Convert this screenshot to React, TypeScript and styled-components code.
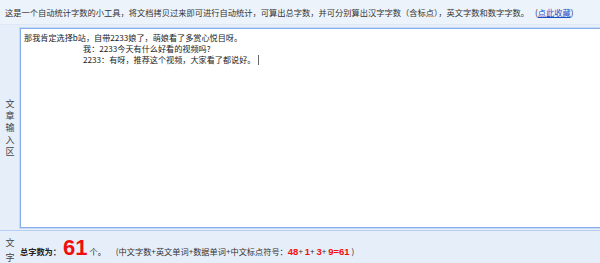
import styled, { createGlobalStyle } from "styled-components";

const GlobalStyle = createGlobalStyle`
    html, body {
        margin: 0;
        padding: 0;
        overflow: hidden;
        background: #e6eef9;
    }

    body {
        font-family: "Noto Sans CJK SC", "Noto Sans", sans-serif;
        color: #333;
    }
`;

const lines = [
    { indent: 0, text: "那我肯定选择b站，自带2233娘了，萌娘看了多赏心悦目呀。" },
    { indent: 59, text: "我：2233今天有什么好看的视频吗?" },
    { indent: 59, text: "2233：有呀，推荐这个视频，大家看了都说好。", caret: true },
];

export default function App() {
    return (
        <>
            <GlobalStyle />
            <Page>
                <Intro>
                    这是一个自动统计字数的小工具，将文档拷贝过来即可进行自动统计，可算出总字数，并可分别算出汉字字数（含标点），英文字数和数字字数。
                    <Fav>
                        (<FavLink href="#">点此收藏</FavLink>)
                    </Fav>
                </Intro>
                <Row>
                    <Label>
                        <span>文</span>
                        <span>章</span>
                        <span>输</span>
                        <span>入</span>
                        <span>区</span>
                    </Label>
                    <Editor>
                        {lines.map((line, i) => (
                            <Line key={i} $indent={line.indent}>
                                {line.text}
                                {line.caret && <Caret />}
                            </Line>
                        ))}
                    </Editor>
                </Row>
                <ResultRow>
                    <Label $top>
                        <span>文</span>
                        <span>字</span>
                    </Label>
                    <Result>
                        <strong>总字数为：</strong>
                        <Total>61</Total>
                        <span>个。</span>
                        <Detail>
                            (中文字数+英文单词+数据单词+中文标点符号：
                            <Num>48</Num>+ <Num>1</Num>+ <Num>3</Num>+ <Num>9=61</Num> )
                        </Detail>
                    </Result>
                </ResultRow>
            </Page>
        </>
    );
}

const Page = styled.div`
    width: 600px;
    height: 263px;
    display: flex;
    flex-direction: column;
`;

const Intro = styled.div`
    height: 25px;
    box-sizing: border-box;
    padding: 6px 0 0 5px;
    font-size: 8.25px;
    line-height: 12px;
    white-space: nowrap;
    background: #edf3fb;
    border-bottom: 1px solid #dfe8f4;
`;

const Fav = styled.span`
    margin-left: 6px;
`;

const FavLink = styled.a`
    color: #1a4fc4;
    text-decoration: underline;
`;

const Row = styled.div`
    display: flex;
    padding-top: 3px;
`;

const Label = styled.div<{ $top?: boolean }>`
    width: 20px;
    flex: none;
    display: flex;
    flex-direction: column;
    align-items: center;
    justify-content: ${({ $top }) => ($top ? "flex-start" : "center")};
    padding-top: ${({ $top }) => ($top ? "4px" : "0")};
    font-size: 9px;
    line-height: ${({ $top }) => ($top ? "15px" : "12px")};
    color: #444;
`;

const Editor = styled.div`
    width: 600px;
    height: 200px;
    flex: none;
    box-sizing: border-box;
    padding: 3px 0 0 3px;
    background: #fff;
    border: 1px solid #86aeea;
    box-shadow: 0 0 0 1px #c9dbf4;
    font-size: 8.15px;
    line-height: 11px;
    color: #222;
`;

const Line = styled.div<{ $indent: number }>`
    padding-left: ${({ $indent }) => $indent}px;
    white-space: nowrap;
`;

const Caret = styled.span`
    display: inline-block;
    width: 1px;
    height: 10px;
    margin-left: 3px;
    vertical-align: -2px;
    background: #666;
`;

const ResultRow = styled.div`
    display: flex;
    flex: 1;
    min-height: 0;
    margin-top: 2px;
    border-top: 1px solid #b8cff0;
    overflow: hidden;
`;

const Result = styled.div`
    display: flex;
    align-items: baseline;
    padding-top: 4px;
    font-size: 8.2px;
    color: #222;
    white-space: nowrap;

    strong {
        font-weight: 700;
    }
`;

const Total = styled.span`
    margin: 0 2px 0 2px;
    font-family: "Liberation Sans", Arial, sans-serif;
    font-size: 22px;
    font-weight: 700;
    color: #f20d0d;
`;

const Detail = styled.span`
    margin-left: 10px;
    color: #333;
`;

const Num = styled.span`
    font-family: "Liberation Sans", Arial, sans-serif;
    font-size: 9.5px;
    font-weight: 700;
    color: #f20d0d;
`;
